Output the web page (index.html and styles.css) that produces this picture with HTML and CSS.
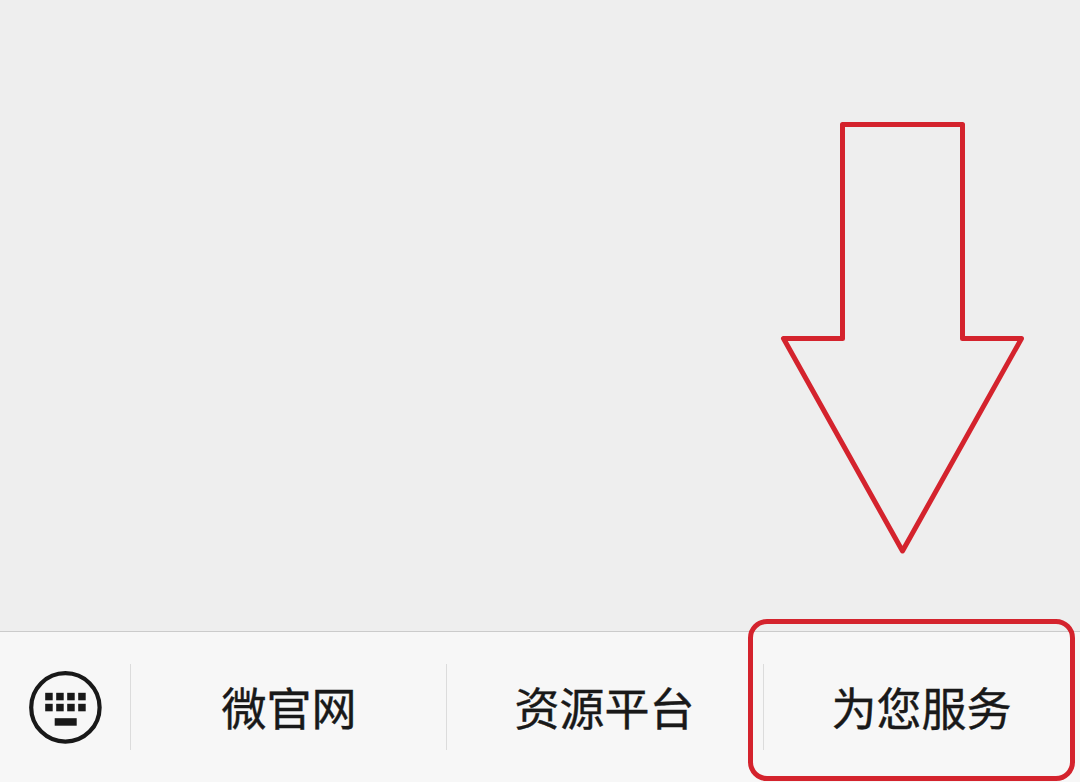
FILE: index.html
```html
<!DOCTYPE html>
<html lang="zh-CN">
<head>
  <meta charset="UTF-8">
  <meta name="viewport" content="width=device-width, initial-scale=1.0">
  <title>为您服务</title>
  <link rel="stylesheet" href="styles.css">
</head>
<body>
  <!-- Chat Area -->
  <main class="chat"></main>

  <!-- Bottom Menu -->
  <nav class="menu-bar">
    <button class="keyboard-button" aria-label="键盘">
      <svg width="74" height="74" viewBox="0 0 74 74">
        <circle cx="37.4" cy="37.4" r="34.2" fill="none" stroke="#191919" stroke-width="4.2"/>
        <g fill="#191919">
          <rect x="17.2" y="22.8" width="7.5" height="7.5"/>
          <rect x="28.2" y="22.8" width="7.5" height="7.5"/>
          <rect x="39.2" y="22.8" width="7.5" height="7.5"/>
          <rect x="50.2" y="22.8" width="7.5" height="7.5"/>
          <rect x="17.2" y="33.8" width="7.5" height="7.5"/>
          <rect x="28.2" y="33.8" width="7.5" height="7.5"/>
          <rect x="39.2" y="33.8" width="7.5" height="7.5"/>
          <rect x="50.2" y="33.8" width="7.5" height="7.5"/>
          <rect x="26.7" y="48.2" width="22" height="7.5"/>
        </g>
      </svg>
    </button>
    <a class="menu-item first" href="#">微官网</a>
    <a class="menu-item" href="#">资源平台</a>
    <a class="menu-item" href="#">为您服务</a>
  </nav>

  <!-- Guide arrow and highlight -->
  <svg class="guide-arrow" width="246" height="436" viewBox="0 0 246 436">
    <path d="M62.5 4.5H182.5V218.5H241.5L122.5 431L3.5 218.5H62.5Z" fill="none" stroke="#d4232d" stroke-width="5" stroke-linejoin="round"/>
  </svg>
  <div class="highlight"></div>
</body>
</html>
```
FILE: styles.css
```css
/* Global Styles */
* {
  box-sizing: border-box;
  margin: 0;
  padding: 0;
}

body {
  position: relative;
  display: flex;
  flex-direction: column;
  height: 782px;
  overflow: hidden;
  font-family: "Noto Sans CJK SC", sans-serif;
  color: #191919;
  background-color: #eeeeee;
}

.chat {
  flex: 1;
}

/* Bottom Menu */
.menu-bar {
  display: grid;
  grid-template-columns: 130px 316px 317px 317px;
  height: 151px;
  padding: 32px 0;
  background-color: #f7f7f7;
  border-top: 1px solid #cbcbcb;
}

.keyboard-button {
  display: flex;
  align-items: center;
  justify-content: center;
  border: none;
  background: none;
}

.menu-item {
  display: flex;
  align-items: center;
  justify-content: center;
  padding-right: 1px;
  border-left: 1px solid #dcdcdc;
  color: #191919;
  font-size: 45px;
  line-height: 60px;
  text-decoration: none;
  -webkit-text-stroke: 0.4px #191919;
}

.menu-item.first {
  padding-right: 0;
  padding-left: 1px;
}

/* Guide Overlay */
.guide-arrow {
  position: absolute;
  top: 120px;
  left: 780px;
}

.highlight {
  position: absolute;
  top: 619px;
  left: 748px;
  width: 327px;
  height: 162px;
  border: 5px solid #d4232d;
  border-radius: 19px;
}
```
